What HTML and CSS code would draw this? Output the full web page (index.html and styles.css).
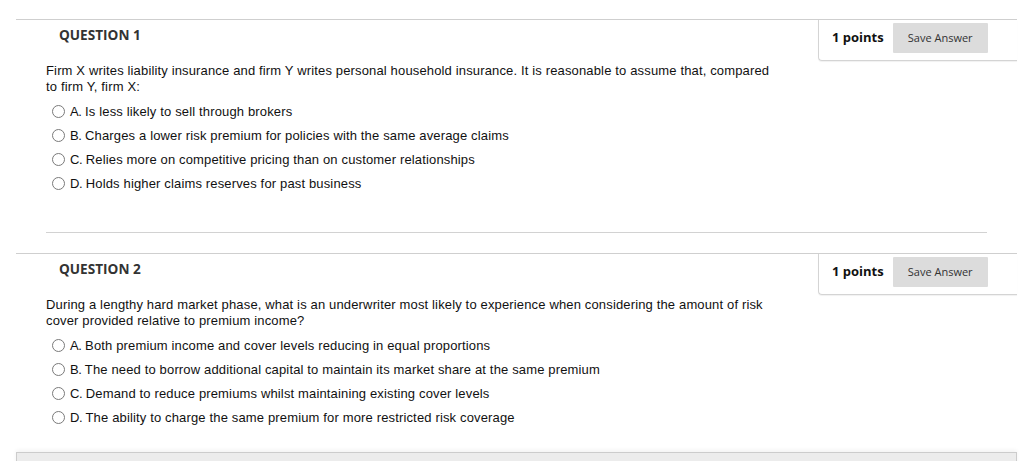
FILE: index.html
```html
<!DOCTYPE html>
<html>
<head>
<meta charset="utf-8">
<link rel="stylesheet" href="styles.css">
</head>
<body>
<div class="page">
  <div class="question">
    <div class="q-head">
      <h3 class="q-title">QUESTION 1</h3>
      <div class="points-box">
        <span class="points">1 points</span>
        <button class="save">Save Answer</button>
      </div>
    </div>
    <div class="q-text">Firm X writes liability insurance and firm Y writes personal household insurance. It is reasonable to assume that, compared<br>to firm Y, firm X:</div>
    <ul class="options">
      <li class="option"><span class="radio"></span><span class="label">A.</span> Is less likely to sell through brokers</li>
      <li class="option"><span class="radio"></span><span class="label">B.</span> Charges a lower risk premium for policies with the same average claims</li>
      <li class="option"><span class="radio"></span><span class="label">C.</span> Relies more on competitive pricing than on customer relationships</li>
      <li class="option"><span class="radio"></span><span class="label">D.</span> Holds higher claims reserves for past business</li>
    </ul>
    <div class="separator"></div>
  </div>
  <div class="question">
    <div class="q-head">
      <h3 class="q-title">QUESTION 2</h3>
      <div class="points-box">
        <span class="points">1 points</span>
        <button class="save">Save Answer</button>
      </div>
    </div>
    <div class="q-text">During a lengthy hard market phase, what is an underwriter most likely to experience when considering the amount of risk<br>cover provided relative to premium income?</div>
    <ul class="options">
      <li class="option"><span class="radio"></span><span class="label">A.</span> Both premium income and cover levels reducing in equal proportions</li>
      <li class="option"><span class="radio"></span><span class="label">B.</span> The need to borrow additional capital to maintain its market share at the same premium</li>
      <li class="option"><span class="radio"></span><span class="label">C.</span> Demand to reduce premiums whilst maintaining existing cover levels</li>
      <li class="option"><span class="radio"></span><span class="label">D.</span> The ability to charge the same premium for more restricted risk coverage</li>
    </ul>
  </div>
  <div class="bottom-bar"></div>
</div>
</body>
</html>
```

FILE: styles.css
```css
html, body {
  margin: 0;
  padding: 0;
  background: #ffffff;
}
.page {
  padding-top: 19px;
  margin-left: 16px;
  width: 1001px;
}
.question {
  border-top: 1px solid #cfcfcf;
}
.q-head {
  display: flex;
  justify-content: space-between;
  align-items: flex-start;
  height: 41px;
}
.q-title {
  margin: 0;
  padding: 6px 0 0 43px;
  font-family: "Open Sans", sans-serif;
  font-weight: 700;
  font-size: 13.6px;
  line-height: 17px;
  color: #333333;
}
.points-box {
  box-sizing: border-box;
  width: 199px;
  height: 41px;
  border-left: 1px solid #d4d4d4;
  border-bottom: 1px solid #d4d4d4;
  border-bottom-left-radius: 4px;
  box-shadow: 0 1px 1px rgba(0,0,0,0.06);
  display: flex;
  align-items: flex-start;
  padding: 3px 0 0 13px;
}
.points {
  font-family: "Open Sans", sans-serif;
  font-weight: 700;
  font-size: 13px;
  line-height: 29px;
  color: #111111;
  margin-right: 9px;
}
.save {
  width: 95px;
  height: 30px;
  border: none;
  border-radius: 1px;
  background: #dcdcdc;
  font-family: "Open Sans", sans-serif;
  font-size: 11px;
  color: #333333;
  padding: 0 0 1px 0;
}
.q-text {
  margin: 2px 0 0 30px;
  font-family: "Liberation Sans", Arial, sans-serif;
  font-size: 13px;
  line-height: 16px;
  letter-spacing: 0.15px;
  color: #111111;
}
.options {
  list-style: none;
  margin: 4px 0 0 0;
  padding: 0 0 0 36px;
}
.option {
  display: flex;
  align-items: center;
  height: 24px;
  font-family: "Liberation Sans", Arial, sans-serif;
  font-size: 13px;
  letter-spacing: 0.15px;
  color: #111111;
  white-space: pre;
}
.radio {
  box-sizing: border-box;
  width: 13px;
  height: 13px;
  border: 1px solid #7a7a7a;
  border-radius: 50%;
  margin-right: 5px;
  flex: none;
}
.label {
  letter-spacing: -0.5px;
}
.separator {
  margin: 37px 30px 20px 30px;
  height: 1px;
  background: #d2d2d2;
}
.bottom-bar {
  margin-top: 23px;
  height: 20px;
  box-sizing: border-box;
  background: #ececec;
  border: 1px solid #cccccc;
  border-bottom: none;
  box-shadow: 0 -2px 4px rgba(0,0,0,0.05);
}
```
